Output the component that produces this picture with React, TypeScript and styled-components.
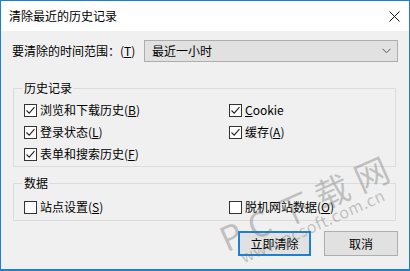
import React from "react";
import styled, { createGlobalStyle } from "styled-components";

const Global = createGlobalStyle`
  html, body { margin: 0; padding: 0; background: #ffffff; }
  * { box-sizing: border-box; }
`;

const FONT = `"Noto Sans CJK SC", "Noto Sans", "Liberation Sans", sans-serif`;

const Window = styled.div`
  position: relative;
  width: 410px;
  height: 271px;
  border: 1px solid #1c7ed6;
  border-bottom-width: 2px;
  background: #f0f0f0;
  font-family: ${FONT};
  font-size: 12px;
  color: #000;
  display: flex;
  flex-direction: column;
  overflow: hidden;
`;

const TitleBar = styled.div`
  height: 30px;
  flex: none;
  background: #ffffff;
  display: flex;
  align-items: center;
  justify-content: space-between;
  padding: 0 9px 0 8px;
  font-size: 12px;
  line-height: 16px;
`;

const CloseIcon = styled.svg`
  width: 11px;
  height: 11px;
  margin-top: 1px;
`;

const Body = styled.div`
  flex: 1;
  display: flex;
  flex-direction: column;
  padding: 9px 11px 0 11px;
`;

const RangeRow = styled.div`
  display: flex;
  align-items: center;
  height: 22px;
`;

const RangeLabel = styled.div`
  width: 132px;
  line-height: 16px;
`;

const Select = styled.div`
  flex: 1;
  height: 22px;
  background: #e1e1e1;
  border: 1px solid #adadad;
  display: flex;
  align-items: center;
  justify-content: space-between;
  padding: 0 6px 0 7px;
  line-height: 16px;
`;

const Group = styled.fieldset<{ $top: number; $pt: number; $pb: number }>`
  margin: ${(p) => p.$top}px 2px 0 1px;
  padding: ${(p) => p.$pt}px 10px ${(p) => p.$pb}px 10px;
  border: 1px solid #dcdcdc;
  min-width: 0;
`;

const Legend = styled.legend`
  padding: 0 1px;
  margin-left: -1px;
  line-height: 16px;
  font-size: 12px;
`;

const Grid = styled.div`
  display: grid;
  grid-template-columns: 205px 1fr;
  grid-auto-rows: 22px;
`;

const Item = styled.label`
  display: flex;
  align-items: center;
  gap: 3px;
  line-height: 16px;
  white-space: nowrap;
`;

const Box = styled.span`
  width: 13px;
  height: 13px;
  border: 1px solid #333333;
  background: #ffffff;
  display: inline-flex;
  align-items: center;
  justify-content: center;
  flex: none;
`;

const Buttons = styled.div`
  display: flex;
  justify-content: flex-end;
  gap: 13px;
  margin-top: 10px;
`;

const Button = styled.div<{ $primary?: boolean; $w: number }>`
  width: ${(p) => p.$w}px;
  height: 25px;
  background: #e1e1e1;
  border: ${(p) => (p.$primary ? "2px solid #1f7fd2" : "1px solid #adadad")};
  display: flex;
  align-items: center;
  justify-content: center;
  line-height: 16px;
`;

const Watermark = styled.div<{ $x: number; $y: number; $size: number; $spacing: number }>`
  position: absolute;
  left: ${(p) => p.$x}px;
  top: ${(p) => p.$y}px;
  font-size: ${(p) => p.$size}px;
  letter-spacing: ${(p) => p.$spacing}px;
  line-height: 1;
  color: rgba(110, 110, 110, 0.38);
  transform-origin: left center;
  transform: rotate(-24deg);
  white-space: nowrap;
  pointer-events: none;
  font-family: ${FONT};
`;

const Check = () => (
  <svg width="11" height="11" viewBox="0 0 11 11">
    <path d="M1.5 5.5 L4.2 8.2 L9.5 2.2" fill="none" stroke="#222" strokeWidth="1.1" />
  </svg>
);

const CheckItem = ({ checked, text, k }: { checked: boolean; text: string; k: string }) => (
  <Item>
    <Box>{checked && <Check />}</Box>
    <span>
      {text}(<u>{k}</u>)
    </span>
  </Item>
);

export default function App() {
  return (
    <>
      <Global />
      <Window>
        <TitleBar>
          <span>清除最近的历史记录</span>
          <CloseIcon viewBox="0 0 11 11">
            <path d="M0.5 0.5 L10.5 10.5 M10.5 0.5 L0.5 10.5" stroke="#111" strokeWidth="1" />
          </CloseIcon>
        </TitleBar>
        <Body>
          <RangeRow>
            <RangeLabel>
              要清除的时间范围：(<u>T</u>)
            </RangeLabel>
            <Select>
              <span>最近一小时</span>
              <svg width="9" height="6" viewBox="0 0 9 6">
                <path d="M0.5 0.8 L4.5 4.8 L8.5 0.8" fill="none" stroke="#555" strokeWidth="1" />
              </svg>
            </Select>
          </RangeRow>
          <Group $top={18} $pt={3} $pb={1}>
            <Legend>历史记录</Legend>
            <Grid>
              <CheckItem checked text="浏览和下载历史" k="B" />
              <Item>
                <Box>
                  <Check />
                </Box>
                <span>
                  <u>C</u>ookie
                </span>
              </Item>
              <CheckItem checked text="登录状态" k="L" />
              <CheckItem checked text="缓存" k="A" />
              <CheckItem checked text="表单和搜索历史" k="F" />
            </Grid>
          </Group>
          <Group $top={8} $pt={5} $pb={2}>
            <Legend>数据</Legend>
            <Grid>
              <CheckItem checked={false} text="站点设置" k="S" />
              <CheckItem checked={false} text="脱机网站数据" k="O" />
            </Grid>
          </Group>
          <Buttons>
            <Button $primary $w={73}>立即清除</Button>
            <Button $w={74}>取消</Button>
          </Buttons>
        </Body>
        <Watermark $x={220} $y={222} $size={34} $spacing={9}>
          PC下载网
        </Watermark>
        <Watermark $x={240} $y={248} $size={16} $spacing={0.5}>
          www.pcsoft.com.cn
        </Watermark>
      </Window>
    </>
  );
}
